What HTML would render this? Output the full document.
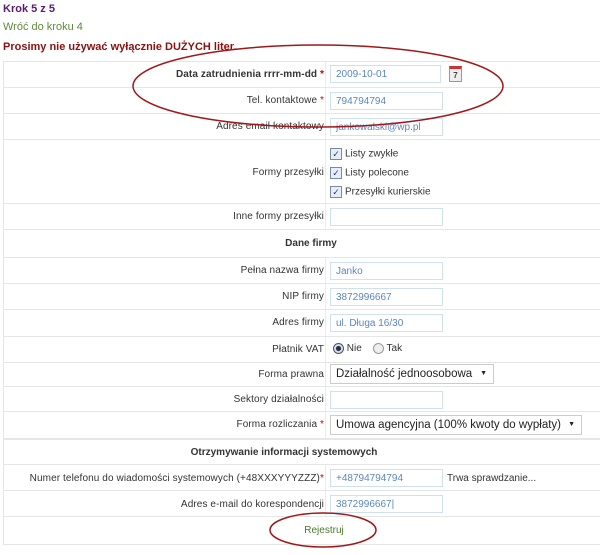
<!DOCTYPE html><html><head><meta charset="utf-8"><style>
body{margin:0;width:600px;height:555px;background:#fff;font-family:"Liberation Sans",Arial,sans-serif;position:relative;overflow:hidden}
.t{position:absolute;white-space:nowrap}
.row{position:absolute;left:3px;width:597px;border-top:1px solid #e6e6e6;border-left:1px solid #e6e6e6}
.lab{position:absolute;right:277px;font-size:10px;color:#333;white-space:nowrap;letter-spacing:0.1px}
.div{position:absolute;left:321px;top:0;bottom:0;border-left:1px solid #ececec}
.inp{position:absolute;left:326px;height:18px;border:1px solid #cfe0ef;font-size:10px;color:#5b86c1;line-height:18px;padding-left:5px;box-sizing:border-box;width:113px;white-space:nowrap}
.star{color:#c00}
.cb{display:inline-block;width:10px;height:10px;border:1px solid #7a8aa0;background:#e8eef8;font-size:9px;line-height:10px;text-align:center;color:#1c3d8c;vertical-align:middle;margin-right:3px}
.sel{position:absolute;left:326px;height:20px;border:1px solid #ccc;font-size:11.5px;color:#222;line-height:18px;padding-left:5px;box-sizing:border-box;white-space:nowrap;overflow:hidden}
.sel b{position:absolute;right:6px;top:0;font-size:7px;font-weight:normal}
</style></head><body>
<div class="t" style="left:3px;top:3px;font-size:11px;font-weight:bold;color:#5a1a6e">Krok 5 z 5</div>
<div class="t" style="left:3px;top:21px;font-size:11px;color:#5f8a3c">Wróć do kroku 4</div>
<div class="t" style="left:3px;top:41px;font-size:11px;font-weight:bold;color:#8a1010">Prosimy nie używać wyłącznie DUŻYCH liter.</div>

<div class="row" style="top:61px;height:26px"><div class="div"></div><div class="lab" style="top:7px;font-weight:bold">Data zatrudnienia rrrr-mm-dd <span class="star">*</span></div><div class="inp" style="top:3px;width:111px">2009-10-01</div>
<div style="position:absolute;left:445px;top:4px;width:11px;height:12px;border:1px solid #999;background:#eee;font-size:8px;font-weight:bold;text-align:center;line-height:14px;color:#444;border-top:3px solid #c33">7</div></div>
<div class="row" style="top:87px;height:26px"><div class="div"></div><div class="lab" style="top:7px">Tel. kontaktowe <span class="star">*</span></div><div class="inp" style="top:4px">794794794</div></div>
<div class="row" style="top:113px;height:26px"><div class="div"></div><div class="lab" style="top:7px">Adres email kontaktowy</div><div class="inp" style="top:4px">jankowalski@wp.pl</div></div>
<div class="row" style="top:139px;height:64px"><div class="div"></div><div class="lab" style="top:27px">Formy przesyłki</div>
<div class="t" style="left:326px;top:8px;font-size:10px;color:#333"><span class="cb">✓</span>Listy zwykłe</div>
<div class="t" style="left:326px;top:27px;font-size:10px;color:#333"><span class="cb">✓</span>Listy polecone</div>
<div class="t" style="left:326px;top:46px;font-size:10px;color:#333"><span class="cb">✓</span>Przesyłki kurierskie</div></div>
<div class="row" style="top:203px;height:26px"><div class="div"></div><div class="lab" style="top:7px">Inne formy przesyłki</div><div class="inp" style="top:4px"></div></div>
<div class="row" style="top:229px;height:28px"><div class="t" style="left:0;width:614px;text-align:center;top:8px;font-size:10px;font-weight:bold;color:#333">Dane firmy</div></div>
<div class="row" style="top:257px;height:26px"><div class="div"></div><div class="lab" style="top:7px">Pełna nazwa firmy</div><div class="inp" style="top:4px">Janko</div></div>
<div class="row" style="top:283px;height:26px"><div class="div"></div><div class="lab" style="top:7px">NIP firmy</div><div class="inp" style="top:4px">3872996667</div></div>
<div class="row" style="top:309px;height:27px"><div class="div"></div><div class="lab" style="top:7px">Adres firmy</div><div class="inp" style="top:4px">ul. Długa 16/30</div></div>
<div class="row" style="top:336px;height:26px"><div class="div"></div><div class="lab" style="top:7px">Płatnik VAT</div>
<div class="t" style="left:329px;top:6px;font-size:10px;color:#333"><span style="display:inline-block;width:9px;height:9px;border-radius:50%;border:1px solid #456;background:radial-gradient(#234 35%,#dde 45%);vertical-align:middle"></span> Nie &nbsp;&nbsp; <span style="display:inline-block;width:9px;height:9px;border-radius:50%;border:1px solid #999;background:#eee;vertical-align:middle"></span> Tak</div></div>
<div class="row" style="top:362px;height:24px"><div class="div"></div><div class="lab" style="top:6px">Forma prawna</div><div class="sel" style="top:1px;width:164px">Działalność jednoosobowa<b>▼</b></div></div>
<div class="row" style="top:386px;height:25px"><div class="div"></div><div class="lab" style="top:7px">Sektory działalności</div><div class="inp" style="top:4px"></div></div>
<div class="row" style="top:411px;height:27px"><div class="div"></div><div class="lab" style="top:7px">Forma rozliczania <span class="star">*</span></div><div class="sel" style="top:3px;width:252px">Umowa agencyjna (100% kwoty do wypłaty)<b>▼</b></div></div>
<div class="row" style="top:438px;height:26px;border-top:2px solid #e6e6e6"><div class="t" style="left:0;width:560px;text-align:center;top:7px;font-size:10px;font-weight:bold;color:#333">Otrzymywanie informacji systemowych</div></div>
<div class="row" style="top:464px;height:26px"><div class="div"></div><div class="lab" style="top:8px">Numer telefonu do wiadomości systemowych (+48XXXYYYZZZ)<span class="star">*</span></div><div class="inp" style="top:4px">+48794794794</div><div class="t" style="left:443px;top:8px;font-size:10px;color:#333">Trwa sprawdzanie...</div></div>
<div class="row" style="top:490px;height:26px"><div class="div"></div><div class="lab" style="top:8px">Adres e-mail do korespondencji</div><div class="inp" style="top:4px">3872996667|</div></div>
<div class="row" style="top:516px;height:27px;border-bottom:1px solid #e6e6e6"><div class="t" style="left:0;width:640px;text-align:center;top:8px;font-size:10px;color:#4a7a2a">Rejestruj</div></div>
<svg style="position:absolute;left:0;top:0" width="600" height="555"><ellipse cx="318" cy="86" rx="185" ry="41" fill="none" stroke="#a01818" stroke-width="1.5"/><ellipse cx="323" cy="530" rx="53" ry="17" fill="none" stroke="#a01818" stroke-width="1.5"/></svg>
</body></html>
